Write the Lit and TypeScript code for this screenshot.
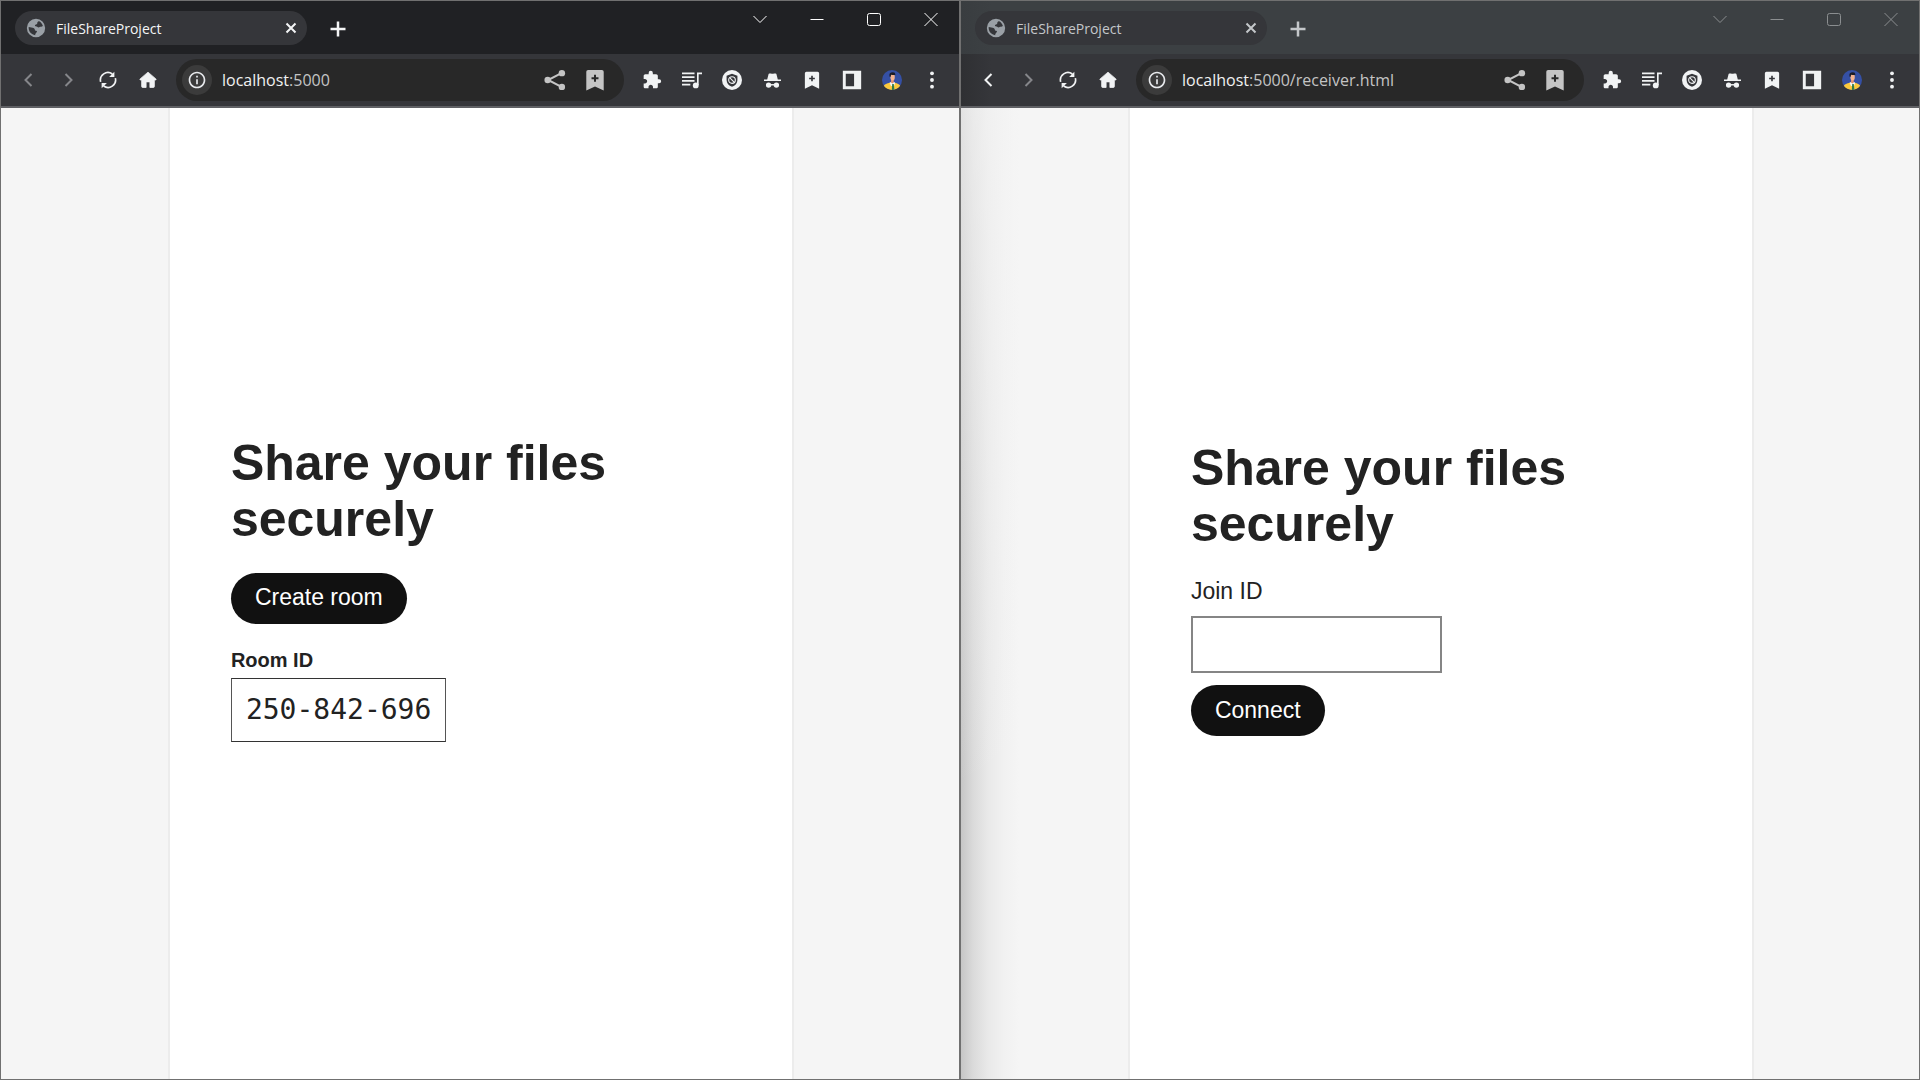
import { LitElement, html, css, svg } from "lit";
import { customElement, property } from "lit/decorators.js";

const stroke = (d: string, w: number, size = 20) => html`
  <svg width=${size} height=${size} viewBox="0 0 ${size} ${size}" fill="none" stroke="currentColor" stroke-width=${w} aria-hidden="true">
    <path d=${d}></path>
  </svg>`;

const icon = (body: unknown, size = 20) => html`
  <svg width=${size} height=${size} viewBox="0 0 24 24" fill="currentColor" aria-hidden="true">${body}</svg>`;

const globe = icon(svg`<path fill-rule="evenodd" d="M12 1a11 11 0 1 0 0 22 11 11 0 0 0 0-22zM11 20.600C6.500 20 3.200 16.300 3.200 12c0-.4 0-.9.1-1.300L8 11.600c1.500.3 2.600 1 2.600 2.400 0 .8.700 1.200 1.600 1.200 1 0 1.300 1 .6 1.900-.8 1-1.800 1.700-1.800 3.500zM20.300 9.500c-1 .3-1.500 1-2.600 1-1.200 0-1.400.8-2.500.8-1.400 0-2.100-1.300-3.500-1.300-.9 0-1.200-.8-.8-1.500.5-.9 1.700-.6 2.300-1.400.7-1 .1-2 1-2.700.5-.5 1.200-.5 1.700-.5 2 1.200 3.600 3.200 4.400 5.600z"></path>`, 20);
const info = icon(svg`<path d="M11 7h2v2h-2zm0 4h2v6h-2zm1-9C6.480 2 2 6.480 2 12s4.480 10 10 10 10-4.480 10-10S17.520 2 12 2zm0 18c-4.410 0-8-3.590-8-8s3.590-8 8-8 8 3.590 8 8-3.590 8-8 8z"></path>`, 20);
const reload = icon(svg`<g fill="none" stroke="currentColor" stroke-width="2.200"><path d="M2.200 14.500A10 10 0 0 1 17.800 4"></path><path d="M21.800 9.500A10 10 0 0 1 6.200 20"></path></g><path d="M20.500 1v7h-7zM3.500 23v-7h7z"></path>`, 18);
const home = icon(svg`<path d="M12 1.500 22.500 10.500q.6.600 0 1.500H20.500v8.500q0 1.500-1.500 1.500h-4.500v-7.500h-5V22H5q-1.500 0-1.500-1.500V12H1.500q-.6-.9 0-1.500z" stroke="currentColor" stroke-linejoin="round"></path>`, 18);
const share = icon(svg`<g stroke="currentColor" stroke-width="2.200"><path d="M19 4.500 4.500 12 19 19.500" fill="none"></path></g><circle cx="19.500" cy="4.500" r="3.500"></circle><circle cx="4" cy="12" r="3.500"></circle><circle cx="19.500" cy="19.500" r="3.500"></circle>`, 22);
const bookmark = (size: number) => icon(svg`<path fill-rule="evenodd" d="M4.500 1h15a2 2 0 0 1 2 2v20.500L12 19l-9.500 4.500V3a2 2 0 0 1 2-2zM10.900 6.200v2.700H8.200v2.200h2.700v2.700h2.200v-2.700h2.700V8.900h-2.700V6.200z"></path>`, size);
const puzzle = icon(svg`<path d="M20.500 11H19V7c0-1.100-.9-2-2-2h-4V3.500a2.500 2.500 0 0 0-5 0V5H4c-1.100 0-1.990.9-1.990 2v3.800H3.500c1.490 0 2.700 1.210 2.700 2.700s-1.210 2.700-2.700 2.700H2V20c0 1.100.9 2 2 2h3.800v-1.500c0-1.490 1.210-2.700 2.700-2.700s2.700 1.210 2.700 2.700V22H17c1.100 0 2-.9 2-2v-4h1.500a2.500 2.500 0 0 0 0-5z"></path>`, 20);
const queue = icon(svg`<g fill="none" stroke="currentColor" stroke-width="2"><path d="M0 4h15M0 8.500h15M0 13h15M0 17.500h10M19 18V4H24"></path></g><circle cx="16.500" cy="18.500" r="3.500"></circle>`, 20);
const shield = icon(svg`<circle cx="12" cy="12" r="12"></circle><path d="M12 4.500 18.500 7v5c0 4-2.600 6.800-6.500 8-3.900-1.200-6.500-4-6.500-8V7z" fill="#35363a"></path><circle cx="12" cy="12" r="4" fill="none" stroke="#f1f3f4" stroke-width="1.300"></circle><path d="m9.200 9.200 5.600 5.600" stroke="#f1f3f4" stroke-width="1.300"></path>`, 20);
const incognito = icon(svg`<path d="M7.500 2h2.300q2.200 1 4.400 0h2.300q.8 0 1 .8L19.500 10.500H24v2.200H0v-2.200h4.500l2-7.700q.2-.8 1-.8z"></path><circle cx="6.500" cy="18.500" r="3.800"></circle><circle cx="17.500" cy="18.500" r="3.800"></circle><path d="M9 17h6v2H9z"></path>`, 17);
const panel = icon(svg`<path fill-rule="evenodd" d="M1 1h22v22H1zM4.500 4.500v15h10v-15z"></path>`, 20);
const dots = icon(svg`<circle cx="12" cy="4" r="2.300"></circle><circle cx="12" cy="12" r="2.300"></circle><circle cx="12" cy="20" r="2.300"></circle>`, 20);
const avatar = html`
  <svg width="20" height="20" viewBox="0 0 20 20" aria-hidden="true">
    <circle cx="10" cy="10" r="10" fill="#3550a5"></circle>
    <path d="M1.800 15.700q1.200-2 6.200-2.900h4.500q4.500.9 5.700 2.900a10 10 0 0 1-16.400 0z" fill="#fbc93d"></path>
    <path d="M7.500 12.800 9 12h3l1.200.8-1.200 3.200H9z" fill="#f4f4f4"></path>
    <path d="M10.200 14h1.600l.6 5.800-2.600.2z" fill="#2f7a4d"></path>
    <path d="M9 9h2.800v3.500l-1.300 1L9 12.500z" fill="#e08f70"></path>
    <ellipse cx="10.600" cy="7" rx="2.200" ry="3.600" fill="#f3b391"></ellipse>
    <path d="M7.600 6.800Q6.800 2.800 9.300 2.500q4-.8 4.200 2.200-2 .8-4.300 0-.5.600-.5 2.100z" fill="#1c1c26"></path>
  </svg>`;

@customElement("browser-window")
export class BrowserWindow extends LitElement {
  @property() host = "";
  @property() path = "";
  @property({ type: Boolean, reflect: true }) inactive = false;
  @property({ type: Boolean, attribute: "can-go-back" }) canGoBack = false;

  static styles = css`
    :host {
      display: flex;
      flex-direction: column;
      min-width: 0;
      box-sizing: border-box;
      border: 1px solid #707070;
      font-family: "Open Sans", "Noto Sans", sans-serif;
      --strip: #202124;
      --toolbar: #35363a;
      --page: #f5f5f5;
      --tab-text: #f4f5f6;
      --caption: #ffffff;
    }
    :host([inactive]) {
      --strip: linear-gradient(90deg, #393d40, #3c4043 30px);
      --toolbar: linear-gradient(90deg, #2f3033, #35363a 30px);
      --page: linear-gradient(180deg, #f5f5f599, #f5f5f500 70%),
        linear-gradient(90deg, #c6c6c6, #dadada 12px, #e9e9e9 27px, #f1f1f1 43px, #f5f5f5 58px);
      --tab-text: #c4c7ca;
      --caption: #8b8e90;
    }
    button {
      display: grid;
      place-items: center;
      padding: 0;
      border: 0;
      background: none;
      color: inherit;
      font: inherit;
    }
    svg {
      display: block;
    }
    .strip {
      display: flex;
      height: 53px;
      background: var(--strip);
      color: var(--tab-text);
    }
    .tab {
      display: flex;
      align-items: center;
      gap: 10px;
      box-sizing: border-box;
      width: 292px;
      height: 34px;
      margin: 10px 0 0 14px;
      padding: 0 6px 0 11px;
      border-radius: 17px;
      background: #35363a;
      font-size: 14px;
    }
    .globe {
      color: #9aa0a6;
    }
    .title {
      flex: 1;
    }
    .close {
      width: 20px;
      height: 20px;
    }
    .new {
      width: 34px;
      height: 34px;
      margin: 11px 0 0 14px;
    }
    .captions {
      display: flex;
      margin-left: auto;
      color: var(--caption);
    }
    .captions button {
      width: 57px;
      height: 36px;
    }
    .toolbar {
      display: flex;
      align-items: center;
      height: 52px;
      padding: 0 7px;
      border-bottom: 2px solid #5f6064;
      background: var(--toolbar);
      color: #f1f3f4;
    }
    .tool {
      width: 40px;
      height: 40px;
      flex: none;
    }
    .tool:disabled {
      color: #85868a;
    }
    .address {
      display: flex;
      align-items: center;
      flex: 1;
      min-width: 0;
      height: 42px;
      margin: 0 8px;
      padding: 0 9px 0 6px;
      border-radius: 21px;
      background: #282828;
      color: #c4c4c4;
    }
    .site {
      width: 30px;
      height: 30px;
      border-radius: 15px;
      background: #3b3b3b;
      color: #e8eaed;
      flex: none;
    }
    .url {
      flex: 1;
      min-width: 0;
      margin-left: 10px;
      font-size: 16px;
      line-height: 24px;
      white-space: nowrap;
      overflow: hidden;
    }
    .host {
      color: #f1f1f1;
    }
    .page {
      display: flex;
      flex: 1;
      justify-content: center;
      padding-left: 2px;
      background: var(--page);
    }
    main {
      display: flex;
      box-sizing: border-box;
      width: 65.5%;
      padding: 0 61px 11px;
      border: solid #ececec;
      border-width: 0 2px;
      background: #fff;
    }
  `;

  render() {
    return html`
      <header class="strip">
        <div class="tab">
          <span class="globe">${globe}</span>
          <span class="title">FileShareProject</span>
          <button class="close" aria-label="Close tab">${stroke("M5.500 5.500l9 9M14.500 5.500l-9 9", 2)}</button>
        </div>
        <button class="new" aria-label="New tab">${stroke("M10 2.500v15M2.500 10h15", 2.5)}</button>
        <div class="captions">
          <button aria-label="Search tabs">${stroke("M3.500 7l6.500 6.500 6.500-6.500", 1)}</button>
          <button aria-label="Minimize">${stroke("M3.500 10.500h13", 1)}</button>
          <button aria-label="Maximize">${stroke("M5.500 4.500h9q2 0 2 2v8q0 2-2 2h-9q-2 0-2-2v-8q0-2 2-2z", 1)}</button>
          <button aria-label="Close">${stroke("M3.500 4l13 13M16.500 4l-13 13", 1)}</button>
        </div>
      </header>
      <nav class="toolbar">
        <button class="tool" aria-label="Back" ?disabled=${!this.canGoBack}>${stroke("M13.500 4L7.500 10l6 6", 2)}</button>
        <button class="tool" aria-label="Forward" disabled>${stroke("M7.500 4l6 6-6 6", 2)}</button>
        <button class="tool" aria-label="Reload">${reload}</button>
        <button class="tool" aria-label="Home">${home}</button>
        <div class="address">
          <button class="site" aria-label="Site information">${info}</button>
          <span class="url"><span class="host">${this.host}</span>${this.path}</span>
          <button class="tool" aria-label="Share">${share}</button>
          <button class="tool" aria-label="Bookmark">${bookmark(22)}</button>
        </div>
        <button class="tool" aria-label="Extensions">${puzzle}</button>
        <button class="tool" aria-label="Media">${queue}</button>
        <button class="tool" aria-label="Shield">${shield}</button>
        <button class="tool" aria-label="Private window">${incognito}</button>
        <button class="tool" aria-label="Saved pages">${bookmark(18)}</button>
        <button class="tool" aria-label="Side panel">${panel}</button>
        <button class="tool" aria-label="Profile">${avatar}</button>
        <button class="tool" aria-label="Menu">${dots}</button>
      </nav>
      <div class="page">
        <main><slot></slot></main>
      </div>
    `;
  }
}

@customElement("share-page")
export class SharePage extends LitElement {
  @property() mode: "send" | "receive" = "send";
  @property({ attribute: "room-id" }) roomId = "";

  static styles = css`
    :host {
      display: flex;
      flex-direction: column;
      justify-content: center;
      align-items: flex-start;
      flex: 1;
      color: #222;
      font-family: "Liberation Sans", Arial, sans-serif;
    }
    h1 {
      max-width: 460px;
      margin: 0 0 26px;
      font-size: 50px;
      line-height: 56px;
    }
    button {
      height: 51px;
      padding: 0 24px 2px;
      border: 0;
      border-radius: 26px;
      background: #111;
      color: #fff;
      font: 23px/26px "Liberation Sans", Arial, sans-serif;
    }
    h2 {
      margin: 25px 0 6px;
      font-size: 20px;
      line-height: 23px;
    }
    output {
      padding: 0 14px;
      border: 1px solid #333;
      border-inline-color: #555;
      font: 28px/62px "DejaVu Sans Mono", monospace;
    }
    label {
      font-size: 23px;
      line-height: 26px;
    }
    input {
      box-sizing: border-box;
      width: 251px;
      height: 57px;
      margin: 12px 0;
      padding: 0 12px;
      border: 2px solid #858585;
      background: #fff;
      font-size: 23px;
    }
  `;

  render() {
    return html`
      <h1>Share your files securely</h1>
      ${this.mode === "send"
        ? html`
            <button>Create room</button>
            <h2 id="room">Room ID</h2>
            <output aria-labelledby="room">${this.roomId}</output>
          `
        : html`
            <label for="join">Join ID</label>
            <input id="join" type="text" />
            <button>Connect</button>
          `}
    `;
  }
}

@customElement("app-root")
export class AppRoot extends LitElement {
  static styles = css`
    :host {
      display: grid;
      grid-template-columns: 1fr 1fr;
      min-height: 100vh;
    }
  `;

  render() {
    return html`
      <browser-window host="localhost" path=":5000">
        <share-page mode="send" room-id="250-842-696"></share-page>
      </browser-window>
      <browser-window host="localhost" path=":5000/receiver.html" inactive can-go-back>
        <share-page mode="receive"></share-page>
      </browser-window>
    `;
  }
}
